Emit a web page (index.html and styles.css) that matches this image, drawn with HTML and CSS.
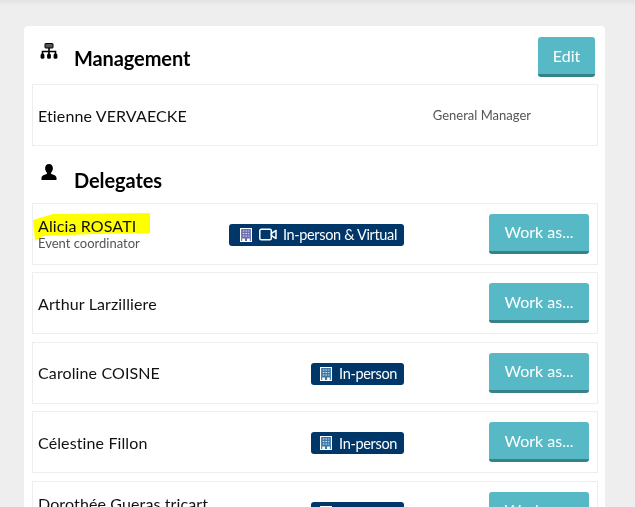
FILE: index.html
```html
<!DOCTYPE html>
<html lang="en">
<head>
<meta charset="utf-8">
<title>Management and delegates</title>
<link rel="stylesheet" href="styles.css">
</head>
<body>
<div class="topshade"></div>
<main class="card">
  <header class="section-head first">
    <svg class="head-icon" viewBox="0 0 18 16" width="18" height="16"><rect x="5" y="0.500" width="8" height="4.500" rx=".6" fill="#555" stroke="#000"/><path d="M9 5v4M2.500 11V8.500h13V11M9 8.500V11" fill="none" stroke="#000" stroke-width="1.600"/><rect x=".6" y="10.500" width="3.800" height="5.200" rx="1.500"/><rect x="7.100" y="10.500" width="3.800" height="5.200" rx="1.500"/><rect x="13.600" y="10.500" width="3.800" height="5.200" rx="1.500"/></svg>
    <h2 class="section-title">Management</h2>
    <button class="btn btn-edit">Edit</button>
  </header>
  <div class="row row-manager">
    <div class="person"><div class="name">Etienne VERVAECKE</div></div>
    <div class="role">General Manager</div>
  </div>
  <header class="section-head">
    <svg class="head-icon person-icon" viewBox="0 0 16 18" width="16" height="18"><path d="M8 0c2.600 0 3.900 2 3.900 4.300 0 1.800-.8 3.500-1.800 4.400v1.200c2.400.6 5.400 1.600 5.400 3.900v2.200H.5v-2.200c0-2.300 3-3.300 5.400-3.900V8.700C4.900 7.800 4.100 6.100 4.100 4.300 4.100 2 5.400 0 8 0z"/></svg>
    <h2 class="section-title">Delegates</h2>
  </header>
  <div class="row">
    <div class="person person-double">
      <div class="name">Alicia ROSATI</div>
      <div class="sub">Event coordinator</div>
    </div>
    <div class="badge badge-dual">
      <svg class="ico-building" viewBox="0 0 11 14" width="12" height="14" preserveAspectRatio="none"><rect x=".5" y=".5" width="10" height="13" fill="#6a6fb0" stroke="#fff"/><path d="M2.500 3h6M2.500 5.500h6M2.500 8h6" stroke="#d8d8ee" stroke-dasharray="1.500 1"/><rect x="2" y="10.500" width="2.500" height="3" fill="#fff"/><rect x="6.500" y="10.500" width="2.500" height="3" fill="#fff"/></svg>
      <svg class="ico-video" viewBox="0 0 18 13" width="18" height="13"><rect x=".8" y="1.300" width="11.500" height="10.400" rx="1.500" fill="none" stroke="#fff" stroke-width="1.500"/><path d="M12.500 5.300 17 2.500v8l-4.500-2.800z" fill="none" stroke="#fff" stroke-width="1.500" stroke-linejoin="round"/></svg>
      <span>In-person &amp; Virtual</span>
    </div>
    <div class="action"><button class="btn btn-work">Work as...</button></div>
  </div>
  <div class="row">
    <div class="person"><div class="name">Arthur Larzilliere</div></div>
    <div class="action"><button class="btn btn-work">Work as...</button></div>
  </div>
  <div class="row">
    <div class="person"><div class="name">Caroline COISNE</div></div>
    <div class="badge">
      <svg class="ico-building" viewBox="0 0 11 14" width="12" height="14" preserveAspectRatio="none"><rect x=".5" y=".5" width="10" height="13" fill="#3d78a8" stroke="#fff"/><path d="M2.500 3h6M2.500 5.500h6M2.500 8h6" stroke="#cfe3f2" stroke-dasharray="1.500 1"/><rect x="2" y="10.500" width="2.500" height="3" fill="#fff"/><rect x="6.500" y="10.500" width="2.500" height="3" fill="#fff"/></svg>
      <span>In-person</span>
    </div>
    <div class="action"><button class="btn btn-work">Work as...</button></div>
  </div>
  <div class="row">
    <div class="person"><div class="name">Célestine Fillon</div></div>
    <div class="badge">
      <svg class="ico-building" viewBox="0 0 11 14" width="12" height="14" preserveAspectRatio="none"><rect x=".5" y=".5" width="10" height="13" fill="#3d78a8" stroke="#fff"/><path d="M2.500 3h6M2.500 5.500h6M2.500 8h6" stroke="#cfe3f2" stroke-dasharray="1.500 1"/><rect x="2" y="10.500" width="2.500" height="3" fill="#fff"/><rect x="6.500" y="10.500" width="2.500" height="3" fill="#fff"/></svg>
      <span>In-person</span>
    </div>
    <div class="action"><button class="btn btn-work">Work as...</button></div>
  </div>
  <div class="row">
    <div class="person person-double">
      <div class="name">Dorothée Gueras tricart</div>
      <div class="sub">&nbsp;</div>
    </div>
    <div class="badge">
      <svg class="ico-building" viewBox="0 0 11 14" width="12" height="14" preserveAspectRatio="none"><rect x=".5" y=".5" width="10" height="13" fill="#3d78a8" stroke="#fff"/><path d="M2.500 3h6M2.500 5.500h6M2.500 8h6" stroke="#cfe3f2" stroke-dasharray="1.500 1"/><rect x="2" y="10.500" width="2.500" height="3" fill="#fff"/><rect x="6.500" y="10.500" width="2.500" height="3" fill="#fff"/></svg>
      <span>In-person</span>
    </div>
    <div class="action"><button class="btn btn-work">Work as...</button></div>
  </div>
</main>
<svg class="highlight" viewBox="0 0 118 29" width="118" height="29"><path d="M0 7 3 6 20 1 117 0 117 20 60 21 10 23 2 28z" fill="#ffff00"/></svg>
</body>
</html>
```
FILE: styles.css
```css
* { box-sizing: border-box; }
html, body { margin: 0; height: 507px; overflow: hidden; }
body {
  background: #eeeeee;
  font-family: Lato, "Open Sans", sans-serif;
  color: #111;
  padding: 26px 30px 0 24px;
  position: relative;
}
.topshade {
  position: absolute;
  left: 0; right: 0; top: 0;
  height: 6px;
  background: linear-gradient(#e2e2e2, #eeeeee);
}
.card {
  position: relative;
  background: #fff;
  border-radius: 4px 4px 0 0;
  padding: 11px 7px 0 8px;
  height: 600px;
}
.section-head {
  display: flex;
  align-items: flex-start;
  height: 47px;
}
.section-head:not(.first) { margin-top: 9.500px; }
.head-icon { margin: 6px 0 0 8px; flex: none; }
.person-icon { margin: 8px 0 0 9px; }
.section-title {
  margin: 7px 0 0 16px;
  font-size: 20px;
  line-height: 28px;
  font-weight: 700;
  color: #000;
  flex: 1;
  letter-spacing: -.1px;
}
.person-icon + .section-title { margin: 10px 0 0 17px; }
.btn {
  font-family: inherit;
  color: #fff;
  background: #56b9c5;
  border: 0;
  border-bottom: 3px solid #358289;
  border-radius: 3px;
  padding: 0 0 1px;
  font-size: 16px;
}
.btn-edit { width: 57px; height: 40px; margin-right: 3px; }
.btn-work { width: 100px; height: 40px; }
.row {
  display: flex;
  align-items: center;
  height: 62px;
  margin-bottom: 7.500px;
  border: 1px solid #eeeeee;
  padding: 0 8px 0 5px;
  background: #fff;
}
.person { flex: 1; min-width: 0; padding-top: 1px; }
.name { font-size: 16px; line-height: 18px; color: #111; letter-spacing: .12px; }
.sub { font-size: 13px; line-height: 16px; color: #555; }
.role { font-size: 13px; color: #555; margin-right: 58px; }
.badge {
  display: flex;
  align-items: center;
  height: 22px;
  margin-top: 2px;
  padding: 0 7px 0 9px;
  background: #003768;
  color: #fff;
  border-radius: 3px;
  font-size: 14.500px;
  letter-spacing: -.35px;
  white-space: nowrap;
}
.badge-dual { padding-left: 11px; }
.ico-building { margin-right: 7px; flex: none; }
.ico-video { margin-right: 6px; flex: none; }
.action { width: 185px; display: flex; justify-content: flex-end; }
.highlight {
  position: absolute;
  left: 33px;
  top: 213px;
  mix-blend-mode: multiply;
}
```
